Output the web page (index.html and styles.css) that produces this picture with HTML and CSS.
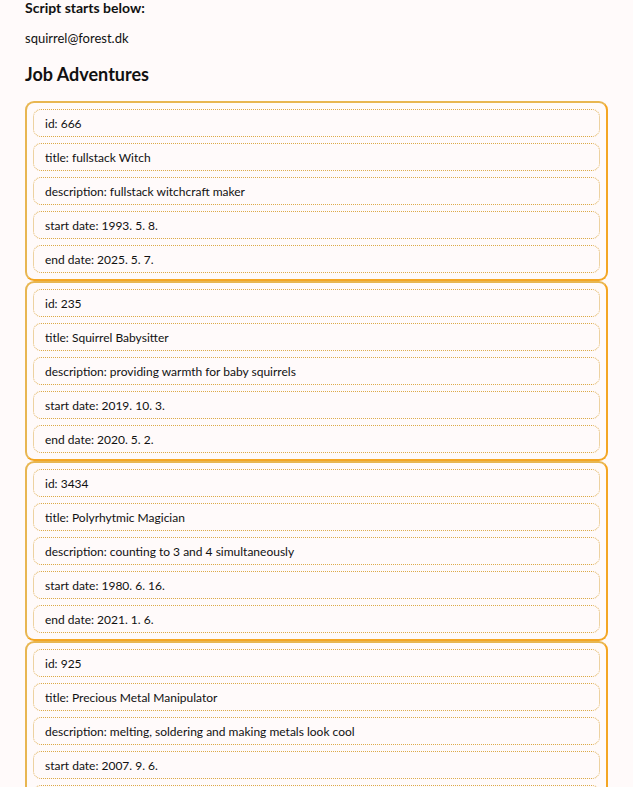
FILE: index.html
```html
<!DOCTYPE html>
<html>
<head>
<meta charset="utf-8">
<title>Job Adventures</title>
<link rel="stylesheet" href="styles.css">
</head>
<body>
<h4 class="intro">Script starts below:</h4>
<p class="email">squirrel@forest.dk</p>
<h2 class="title">Job Adventures</h2>
<div class="jobs">
  <div class="job">
    <div class="field">id: 666</div>
    <div class="field">title: fullstack Witch</div>
    <div class="field">description: fullstack witchcraft maker</div>
    <div class="field">start date: 1993. 5. 8.</div>
    <div class="field">end date: 2025. 5. 7.</div>
  </div>
  <div class="job">
    <div class="field">id: 235</div>
    <div class="field">title: Squirrel Babysitter</div>
    <div class="field">description: providing warmth for baby squirrels</div>
    <div class="field">start date: 2019. 10. 3.</div>
    <div class="field">end date: 2020. 5. 2.</div>
  </div>
  <div class="job">
    <div class="field">id: 3434</div>
    <div class="field">title: Polyrhytmic Magician</div>
    <div class="field">description: counting to 3 and 4 simultaneously</div>
    <div class="field">start date: 1980. 6. 16.</div>
    <div class="field">end date: 2021. 1. 6.</div>
  </div>
  <div class="job">
    <div class="field">id: 925</div>
    <div class="field">title: Precious Metal Manipulator</div>
    <div class="field">description: melting, soldering and making metals look cool</div>
    <div class="field">start date: 2007. 9. 6.</div>
    <div class="field">end date: 2012. 4. 1.</div>
  </div>
</div>
</body>
</html>
```
FILE: styles.css
```css
html, body {
  background: #fffafa;
}
body {
  margin: 0;
  padding: 0 25px;
  font-family: Lato, "Open Sans", sans-serif;
  color: #111;
}
.intro {
  margin: 0;
  font-size: 14px;
  line-height: 16px;
  font-weight: 700;
}
.email {
  margin: 14px 0 0;
  font-size: 13px;
  line-height: 16px;
}
.title {
  margin: 17px 0 0;
  font-size: 18px;
  line-height: 22px;
  font-weight: 700;
}
.jobs {
  margin-top: 16px;
  display: flex;
  flex-direction: column;
}
.job {
  border: 2px solid;
  border-color: #e8b651 #f4a624 #f4a624 #e8b651;
  border-radius: 9px;
  padding: 6px;
  display: flex;
  flex-direction: column;
  gap: 6px;
}
.field {
  height: 28px;
  box-sizing: border-box;
  border: 1px dotted #dcaa48;
  border-radius: 8px;
  padding: 0 11px;
  display: flex;
  align-items: center;
  font-size: 12px;
}
```
